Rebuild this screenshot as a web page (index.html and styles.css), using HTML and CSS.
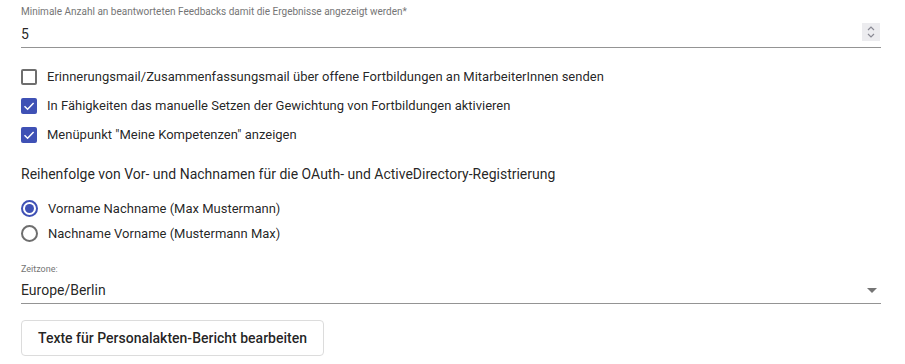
FILE: index.html
```html
<!DOCTYPE html>
<html lang="de">
<head>
<meta charset="utf-8">
<link rel="stylesheet" href="styles.css">
</head>
<body>
<div class="page">
  <div class="field number-field">
    <label class="field-label">Minimale Anzahl an beantworteten Feedbacks damit die Ergebnisse angezeigt werden*</label>
    <div class="field-input">
      <span class="value">5</span>
      <span class="spinner">
        <svg width="10" height="14" viewBox="0 0 10 14"><path d="M2 5 L5 2 L8 5" fill="none" stroke="#8a8a94" stroke-width="1.2"/><path d="M2 9 L5 12 L8 9" fill="none" stroke="#8a8a94" stroke-width="1.2"/></svg>
      </span>
    </div>
  </div>

  <div class="checks">
    <div class="check">
      <span class="box"></span>
      <span class="check-label">Erinnerungsmail/Zusammenfassungsmail über offene Fortbildungen an MitarbeiterInnen senden</span>
    </div>
    <div class="check">
      <span class="box checked"><svg width="16" height="16" viewBox="0 0 16 16"><path d="M3.5 8.2 L6.6 11.2 L12.6 5" fill="none" stroke="#fff" stroke-width="1.5"/></svg></span>
      <span class="check-label">In Fähigkeiten das manuelle Setzen der Gewichtung von Fortbildungen aktivieren</span>
    </div>
    <div class="check">
      <span class="box checked"><svg width="16" height="16" viewBox="0 0 16 16"><path d="M3.5 8.2 L6.6 11.2 L12.6 5" fill="none" stroke="#fff" stroke-width="1.5"/></svg></span>
      <span class="check-label">Menüpunkt "Meine Kompetenzen" anzeigen</span>
    </div>
  </div>

  <div class="section-title">Reihenfolge von Vor- und Nachnamen für die OAuth- und ActiveDirectory-Registrierung</div>

  <div class="radios">
    <div class="radio">
      <span class="circle selected"><span class="dot"></span></span>
      <span class="radio-label">Vorname Nachname (Max Mustermann)</span>
    </div>
    <div class="radio">
      <span class="circle"></span>
      <span class="radio-label">Nachname Vorname (Mustermann Max)</span>
    </div>
  </div>

  <div class="field select-field">
    <label class="field-label small">Zeitzone:</label>
    <div class="field-input">
      <span class="value">Europe/Berlin</span>
      <span class="arrow"></span>
    </div>
  </div>

  <button class="btn">Texte für Personalakten-Bericht bearbeiten</button>
</div>
</body>
</html>
```

FILE: styles.css
```css
* { box-sizing: border-box; }
html, body { margin: 0; padding: 0; background: #fff; }
body {
  font-family: Roboto, "Liberation Sans", sans-serif;
  color: rgba(0,0,0,0.87);
  width: 905px;
  height: 364px;
  overflow: hidden;
}
.page {
  padding: 6px 24px 0 21px;
  display: flex;
  flex-direction: column;
}
.field { display: flex; flex-direction: column; }
.field-label {
  font-size: 10px;
  line-height: 12px;
  color: #757575;
}
.field-label.small { font-size: 9px; line-height: 11px; }
.field-input {
  display: flex;
  align-items: center;
  justify-content: space-between;
  border-bottom: 1px solid #949494;
}
.number-field .field-input { height: 30px; padding-bottom: 2px; }
.number-field .value { font-size: 14px; line-height: 18px; padding-top: 4px; }
.spinner {
  width: 18px;
  height: 18px;
  background: #ececef;
  display: flex;
  align-items: center;
  justify-content: center;
  margin-right: 1px;
  margin-top: 1px;
}
.checks {
  margin-top: 21px;
  display: flex;
  flex-direction: column;
  gap: 13px;
}
.check { display: flex; align-items: center; height: 16px; }
.box {
  width: 16px;
  height: 16px;
  border: 2px solid #6e6e6e;
  border-radius: 2px;
  margin-right: 10px;
  flex: none;
  display: flex;
}
.box.checked { background: #3f51b5; border: none; }
.check-label { font-size: 13px; line-height: 16px; }
.section-title {
  margin-top: 22px;
  font-size: 14px;
  line-height: 18px;
}
.radios {
  margin-top: 17px;
  display: flex;
  flex-direction: column;
  gap: 8px;
}
.radio { display: flex; align-items: center; height: 17px; }
.circle {
  width: 17px;
  height: 17px;
  border: 2px solid #6e6e6e;
  border-radius: 50%;
  margin-right: 10px;
  flex: none;
  display: flex;
  align-items: center;
  justify-content: center;
}
.circle.selected { border-color: #3f51b5; }
.dot { width: 9px; height: 9px; border-radius: 50%; background: #3f51b5; }
.radio-label { font-size: 13px; line-height: 16px; }
.select-field { margin-top: 22px; }
.select-field .field-input { height: 29px; padding-top: 2px; }
.select-field .value { font-size: 14px; line-height: 18px; }
.arrow {
  width: 0; height: 0;
  border-left: 5px solid transparent;
  border-right: 5px solid transparent;
  border-top: 5px solid #757575;
  margin-right: 4px;
}
.btn {
  align-self: flex-start;
  margin-top: 16px;
  height: 36px;
  padding: 0 16px;
  background: #fff;
  border: 1px solid #dcdcdc;
  border-radius: 4px;
  font-family: Roboto, "Liberation Sans", sans-serif;
  font-size: 14px;
  font-weight: 500;
  color: rgba(0,0,0,0.87);
}
```
